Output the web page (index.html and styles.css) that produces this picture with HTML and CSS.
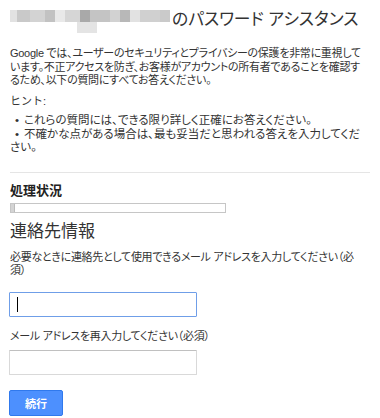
FILE: index.html
```html
<!DOCTYPE html>
<html lang="ja">
<head>
    <meta charset="UTF-8">
    <title>パスワード アシスタンス</title>
    <link rel="stylesheet" href="styles.css">
</head>
<body>
    <div class="page">
        <h1 class="title">
            <span class="mosaic">
                <span class="m1"></span><span class="m2"></span><span class="m3"></span><span class="m4"></span>
                <span class="m5"></span><span class="m6"></span><span class="m7"><i></i></span><span class="m8"></span>
                <span class="m9"></span><span class="m10"></span><span class="m11"></span><span class="m12"></span>
                <span class="m13"></span>
            </span>
            のパスワード アシスタンス
        </h1>

        <p class="intro">Google では、ユーザーのセキュリティとプライバシーの保護を非常に重視しています。不正アクセスを防ぎ、お客様がアカウントの所有者であることを確認するため、以下の質問にすべてお答えください。</p>

        <p class="hint-label">ヒント:</p>
        <ul class="hints">
            <li>これらの質問には、できる限り詳しく正確にお答えください。</li>
            <li>不確かな点がある場合は、最も妥当だと思われる答えを入力してください。</li>
        </ul>

        <hr class="divider">

        <h2 class="status-title">処理状況</h2>
        <div class="progress"><div class="progress-fill" style="width: 1.5%"></div></div>

        <h2 class="section-title">連絡先情報</h2>

        <label class="field-label" for="email">必要なときに連絡先として使用できるメール アドレスを入力してください（必須）</label>
        <div class="field">
            <input class="text-input focused" id="email" type="text">
            <span class="caret"></span>
        </div>

        <label class="field-label second" for="email2">メール アドレスを再入力してください（必須）</label>
        <div class="field second">
            <input class="text-input" id="email2" type="text">
        </div>

        <button class="btn">続行</button>
    </div>
</body>
</html>
```

FILE: styles.css
```css
body, html {
    margin: 0;
    padding: 0;
    background: #fff;
    color: #333;
    font-family: "Liberation Sans", "Noto Sans CJK JP", sans-serif;
}

.page {
    padding: 0 10px;
    width: 360px;
    overflow: hidden;
    height: 418px;
}

.title {
    display: flex;
    align-items: center;
    margin: 0;
    padding-top: 4px;
    height: 28px;
    font-size: 16.8px;
    font-weight: normal;
    color: #333;
    font-feature-settings: "palt";
    white-space: nowrap;
}

/* blurred account name */
.mosaic {
    display: flex;
    height: 12px;
    margin-top: -4px;
    margin-right: 2px;
}

.mosaic span {
    display: block;
    height: 12px;
    position: relative;
}

.m1 { width: 7px; background: #e2e2e2; }
.m2 { width: 13px; background: #c9c9c9; }
.m3 { width: 15px; background: #d3d3d3; }
.m4 { width: 10px; background: #c2c2c2; }
.m5 { width: 10px; background: #e9e9e9; }
.m6 { width: 15px; background: #d6d6d6; }
.m7 { width: 10px; background: #a9a9a9; }
.m8 { width: 20px; background: #c4c4c4; }
.m9 { width: 10px; background: #d2d2d2; }
.m10 { width: 10px; background: #b8b8b8; }
.m11 { width: 10px; background: #e2e2e2; }
.m12 { width: 20px; background: #d0d0d0; }
.m13 { width: 10px; background: #cacaca; }

.m7 i {
    position: absolute;
    top: 12px;
    left: -3px;
    width: 20px;
    height: 11px;
    background: #e4e4e4;
}

.intro {
    margin: 15px 0 0;
    width: 355px;
    font-size: 11px;
    line-height: 13.5px;
    letter-spacing: -0.29px;
    font-feature-settings: "palt";
}

.hint-label {
    margin: 7px 0 0;
    font-size: 11px;
    line-height: 13.5px;
}

.hints {
    margin: 6px 0 0;
    padding: 0;
    list-style: none;
    font-size: 11.5px;
    line-height: 13.5px;
    font-feature-settings: "palt";
}

.hints li::before {
    content: "•";
    display: inline-block;
    width: 14px;
    text-align: center;
}

.divider {
    border: 0;
    border-top: 1px solid #e5e5e5;
    margin: 17px 0 0;
}

.status-title {
    margin: 10px 0 0;
    font-size: 13px;
    line-height: 16px;
    font-weight: bold;
    color: #222;
}

.progress {
    margin-top: 4px;
    width: 214px;
    height: 8px;
    border: 1px solid #c6c6c6;
    background: #fff;
}

.progress-fill {
    height: 100%;
    background: #d4d4d4;
    border-right: 1px solid #bbb;
}

.section-title {
    margin: 9px 0 0;
    font-size: 17px;
    line-height: 20px;
    font-weight: normal;
    color: #333;
}

.field-label {
    display: block;
    margin-top: 9px;
    width: 352px;
    font-size: 11px;
    line-height: 13.5px;
    letter-spacing: -0.3px;
    font-feature-settings: "palt";
}

.field-label.second {
    margin-top: 13px;
}

.field {
    position: relative;
    margin-top: 14px;
    width: 188px;
}

.field.second {
    margin-top: 7px;
}

.text-input {
    display: block;
    box-sizing: border-box;
    width: 188px;
    height: 25px;
    margin: 0 0 0 -1px;
    padding: 0 8px;
    border: 1px solid #d9d9d9;
    border-top-color: #c0c0c0;
    border-radius: 1px;
    background: #fff;
    outline: none;
}

.text-input.focused {
    border-color: #6f9ee8;
}

.caret {
    position: absolute;
    left: 7px;
    top: 5px;
    width: 1px;
    height: 15px;
    background: #000;
}

.btn {
    display: block;
    margin: 15px 0 0 -1px;
    width: 54px;
    height: 26px;
    border: 1px solid #3079ed;
    border-radius: 2px;
    background: #4d90fe;
    color: #fff;
    font-family: "Liberation Sans", "Noto Sans CJK JP", sans-serif;
    font-size: 11px;
    font-weight: bold;
}
```
